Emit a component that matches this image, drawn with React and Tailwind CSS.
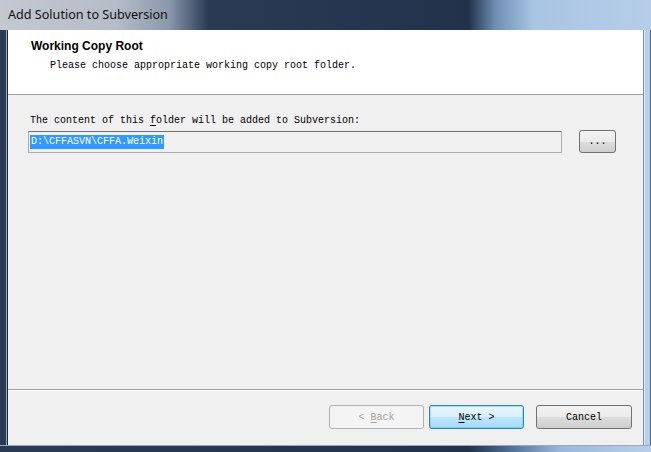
import React from "react";

const mono = { fontFamily: '"Liberation Mono", "DejaVu Sans Mono", monospace' };

export default function App() {
  return (
    <div className="w-[651px] h-[452px] overflow-hidden flex flex-col bg-[linear-gradient(90deg,#2a3a55_0%,#22324b_72%,#4d6c92_78%,#9ab8da_86%,#b7cfe9_100%)]">
      {/* Title bar */}
      <div className="h-[30px] shrink-0 flex items-center bg-[linear-gradient(90deg,#c3c9d1_0%,#b4bcc7_18%,#8a98ab_26%,#2a3a55_32%,#22324b_72%,#6d8db3_76%,#a9c5e4_82%,#b5cde8_100%)]">
        <span className="pl-[8px] pt-[1px] text-[12.6px] text-[#111] leading-none" style={{ fontFamily: '"Noto Sans", "Open Sans", sans-serif' }}>
          Add Solution to Subversion
        </span>
      </div>
      <div className="flex flex-1 min-h-0">
        {/* left frame */}
        <div className="w-[8px] shrink-0 flex">
          <div className="w-[6px] bg-[#2b3b56]" />
          <div className="w-[1px] bg-[#9aa8bc]" />
          <div className="w-[1px] bg-[#1e2a3c]" />
        </div>
        {/* client */}
        <div className="flex-1 flex flex-col bg-[#f0f0f0]">
          <div className="h-[65px] shrink-0 bg-white border-b border-[#a0a0a0] flex flex-col">
            <div className="pl-[23px] pt-[9px] text-[12px] font-bold text-black leading-[14px]" style={{ fontFamily: '"Liberation Sans", Arial, sans-serif' }}>
              Working Copy Root
            </div>
            <div className="pl-[42px] pt-[7px] text-[10px] text-black leading-[12px]" style={mono}>
              Please choose appropriate working copy root folder.
            </div>
          </div>
          <div className="flex-1 flex flex-col">
            <div className="pl-[22px] pt-[20px] text-[10px] text-black leading-[12px]" style={mono}>
              The content of this <span className="underline underline-offset-2">f</span>older will be added to Subversion:
            </div>
            <div className="flex items-center pl-[20px] pt-[4px]">
              <div className="w-[534px] h-[22px] border border-[#abadb3] border-t-[#707070] bg-[#f0f0f0] flex items-center px-[1px]">
                <span className="bg-[#3399ff] text-white text-[10px] leading-[14px] px-[1px]" style={mono}>
                  D:\CFFASVN\CFFA.Weixin
                </span>
              </div>
              <div className="ml-[17px] -mt-[1px] w-[37px] h-[23px] rounded-[3px] border border-[#707070] bg-[linear-gradient(#f2f2f2,#ebebeb_50%,#dddddd_51%,#cfcfcf)] flex items-center justify-center text-[10px] text-black" style={mono}>
                ...
              </div>
            </div>
          </div>
          {/* bottom area */}
          <div className="h-[56px] shrink-0 border-t border-[#a0a0a0] flex flex-col">
            <div className="h-[1px] bg-white" />
            <div className="flex justify-end items-start pt-[14px] pr-[11px] gap-[5px]">
              <div className="w-[95px] h-[24px] rounded-[3px] border border-[#adb2b5] bg-[#f4f4f4] flex items-center justify-center text-[10px] text-[#a0a0a0] whitespace-pre" style={mono}>
                {"< "}<span className="underline underline-offset-2">B</span>ack
              </div>
              <div className="w-[95px] h-[24px] rounded-[3px] border border-[#3c7fb1] bg-[linear-gradient(#eaf6fd,#d9f0fc_50%,#bee6fd_51%,#a7d9f5)] shadow-[inset_0_0_0_1px_#48d0ff80] flex items-center justify-center text-[10px] text-black whitespace-pre" style={mono}>
                <span className="underline underline-offset-2">N</span>{"ext >"}
              </div>
              <div className="ml-[7px] w-[96px] h-[24px] rounded-[3px] border border-[#707070] bg-[linear-gradient(#f2f2f2,#ebebeb_50%,#dddddd_51%,#cfcfcf)] flex items-center justify-center text-[10px] text-black" style={mono}>
                Cancel
              </div>
            </div>
          </div>
        </div>
        {/* right frame */}
        <div className="w-[8px] shrink-0 flex">
          <div className="w-[1px] bg-[#6f8fb5]" />
          <div className="w-[1px] bg-[#dfe9f5]" />
          <div className="w-[5px] bg-[#b7cfe9]" />
          <div className="w-[1px] bg-[#4a6588]" />
        </div>
      </div>
      {/* bottom frame */}
      <div className="h-[7px] shrink-0 flex flex-col">
        <div className="h-[1px] bg-[#9aa8bc]" />
        <div className="flex-1" />
      </div>
    </div>
  );
}
